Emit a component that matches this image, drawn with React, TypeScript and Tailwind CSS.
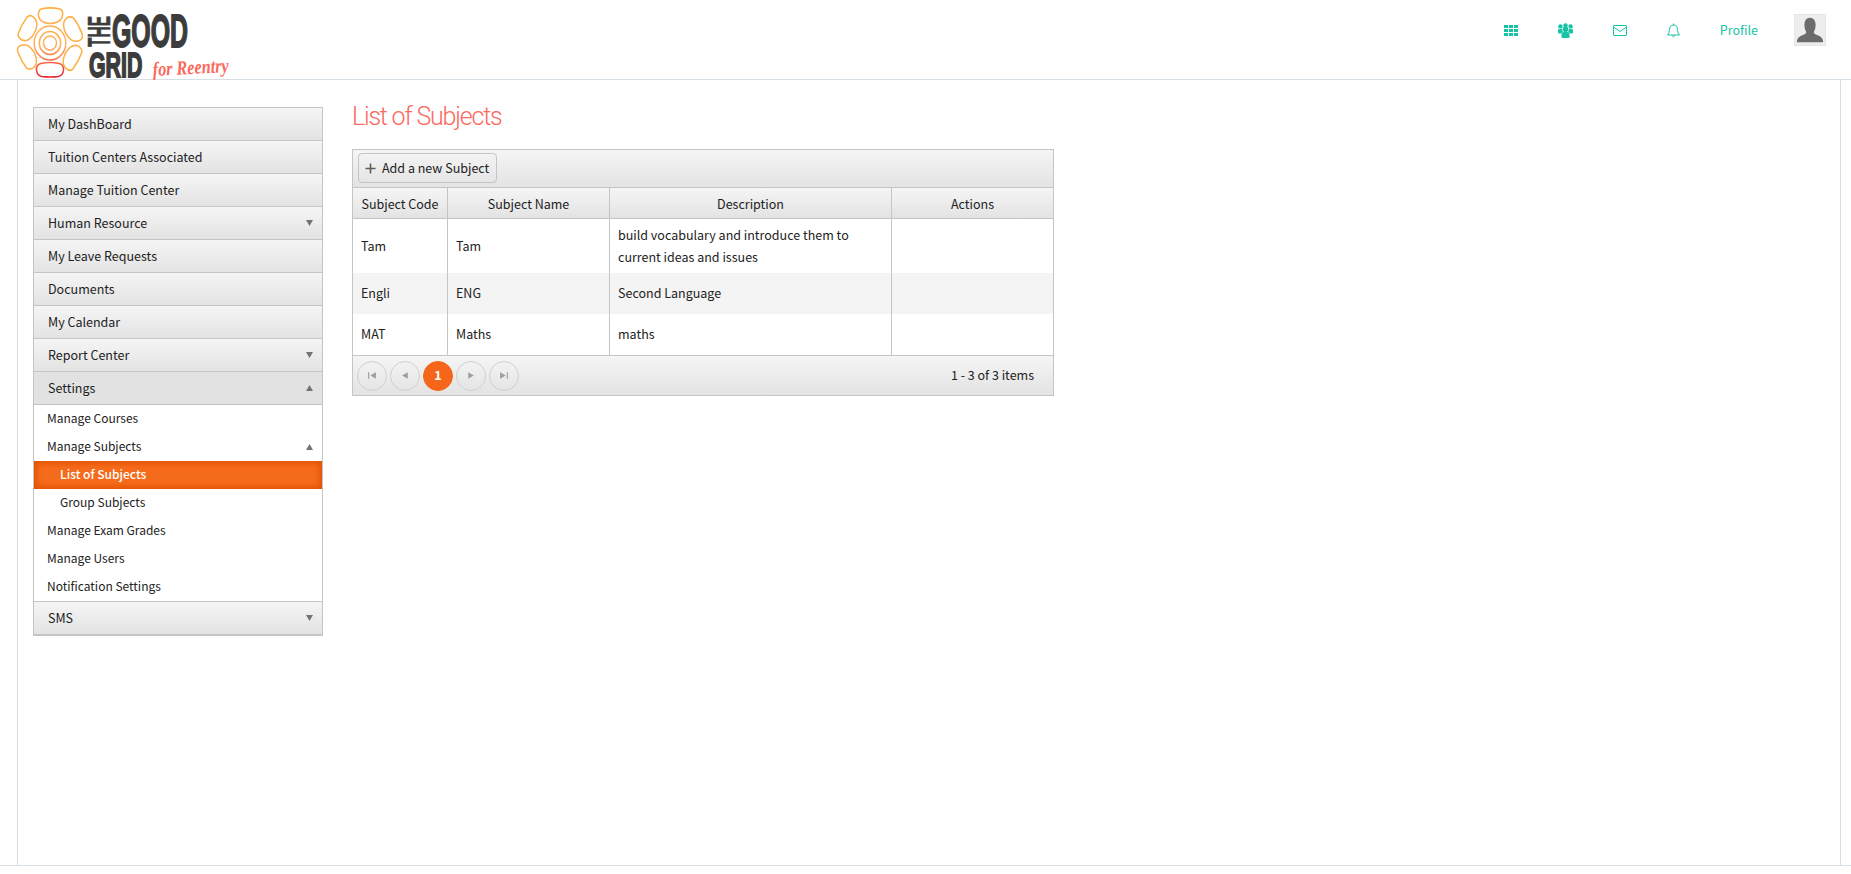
import type { ReactNode } from 'react';

const BODY_FONT = "font-['Noto_Sans_CJK_SC','Noto_Sans',sans-serif]";

function Arrow({ up }: { up?: boolean }) {
  return (
    <svg width="7" height="6" viewBox="0 0 7 6" className="absolute right-[9px] top-1/2 -translate-y-1/2">
      <path d={up ? 'M3.5 0 L7 6 L0 6 Z' : 'M0 0 L7 0 L3.5 6 Z'} fill="#777270" />
    </svg>
  );
}

function PanelRow({ label, arrow, open }: { label: string; arrow?: 'up' | 'down'; open?: boolean }) {
  return (
    <div
      className={`relative h-[33px] border-t border-[#c5c5c5] first:h-[32px] first:border-t-0 pl-[14px] leading-[32px] ${
        open ? 'bg-[#e2e2e2]' : 'bg-linear-to-b from-[#f5f5f5] to-[#e3e3e3]'
      }`}
    >
      {label}
      {arrow && <Arrow up={arrow === 'up'} />}
    </div>
  );
}

function SubRow({ label, indent, arrow, selected }: { label: string; indent?: boolean; arrow?: boolean; selected?: boolean }) {
  return (
    <div
      className={`relative h-[28px] text-[12px] leading-[26px] ${indent ? 'pl-[26px]' : 'pl-[13px]'} ${
        selected ? 'bg-[#f56b1c] font-medium text-white shadow-[inset_0_0_6px_2px_#e04f00]' : ''
      }`}
    >
      {label}
      {arrow && <Arrow up />}
    </div>
  );
}

function Sidebar() {
  return (
    <div className="w-[290px] shrink-0 self-start border border-b-2 border-[#c5c5c5] text-[12.5px] text-[#222]">
      <PanelRow label="My DashBoard" />
      <PanelRow label="Tuition Centers Associated" />
      <PanelRow label="Manage Tuition Center" />
      <PanelRow label="Human Resource" arrow="down" />
      <PanelRow label="My Leave Requests" />
      <PanelRow label="Documents" />
      <PanelRow label="My Calendar" />
      <PanelRow label="Report Center" arrow="down" />
      <PanelRow label="Settings" arrow="up" open />
      <div className="border-t border-[#c5c5c5] bg-white">
        <SubRow label="Manage Courses" />
        <SubRow label="Manage Subjects" arrow />
        <SubRow label="List of Subjects" indent selected />
        <SubRow label="Group Subjects" indent />
        <SubRow label="Manage Exam Grades" />
        <SubRow label="Manage Users" />
        <SubRow label="Notification Settings" />
      </div>
      <PanelRow label="SMS" arrow="down" />
    </div>
  );
}

function PagerButton({ children, active }: { children: ReactNode; active?: boolean }) {
  return (
    <div
      className={`flex h-[30px] w-[30px] items-center justify-center rounded-full border ${
        active ? 'border-[#f5651a] bg-[#f5651a] font-semibold text-white' : 'border-[#d0d0d0]'
      }`}
    >
      {children}
    </div>
  );
}

function PagerIcon({ d }: { d: string }) {
  return (
    <svg width="10" height="9" viewBox="0 0 9 8">
      <path d={d} fill="#a09c9a" />
    </svg>
  );
}

const COLS = 'grid grid-cols-[95px_162px_282px_1fr]';

function Cell({ children, last }: { children?: ReactNode; last?: boolean }) {
  return <div className={`flex items-center px-[8px] ${last ? '' : 'border-r border-[#c5c5c5]'}`}>{children}</div>;
}

function HeadCell({ children, last }: { children: ReactNode; last?: boolean }) {
  return (
    <div className={`flex items-center justify-center pt-[2px] ${last ? '' : 'border-r border-[#c5c5c5]'}`}>{children}</div>
  );
}

function SubjectsTable() {
  return (
    <div className="w-[702px] border border-[#c5c5c5] text-[12.5px] text-[#222]">
      <div className="h-[37px] bg-linear-to-b from-[#f5f5f5] to-[#e3e3e3] pl-[5px] pt-[3px]">
        <div className="flex h-[30px] w-[139px] items-center whitespace-nowrap rounded-[4px] border border-[#c5c5c5] pl-[6px]">
          <svg width="11" height="11" viewBox="0 0 11 11" className="mr-[6px]">
            <path d="M5.5 0.5 V10.5 M0.5 5.5 H10.5" stroke="#605c5a" strokeWidth="1.6" />
          </svg>
          Add a new Subject
        </div>
      </div>
      <div className={`${COLS} h-[32px] border-y border-[#c5c5c5] bg-linear-to-b from-[#f5f5f5] to-[#e3e3e3]`}>
        <HeadCell>Subject Code</HeadCell>
        <HeadCell>Subject Name</HeadCell>
        <HeadCell>Description</HeadCell>
        <HeadCell last>Actions</HeadCell>
      </div>
      <div className={`${COLS} h-[54px]`}>
        <Cell>Tam</Cell>
        <Cell>Tam</Cell>
        <Cell>
          <span className="leading-[22px]">build vocabulary and introduce them to current ideas and issues</span>
        </Cell>
        <Cell last />
      </div>
      <div className={`${COLS} h-[41px] bg-[#f4f4f4]`}>
        <Cell>Engli</Cell>
        <Cell>ENG</Cell>
        <Cell>Second Language</Cell>
        <Cell last />
      </div>
      <div className={`${COLS} h-[41px]`}>
        <Cell>MAT</Cell>
        <Cell>Maths</Cell>
        <Cell>maths</Cell>
        <Cell last />
      </div>
      <div className="flex h-[40px] items-center justify-between border-t border-[#c5c5c5] bg-linear-to-b from-[#f5f5f5] to-[#e3e3e3] pl-[4px] pr-[19px]">
        <div className="flex gap-[3px]">
          <PagerButton><PagerIcon d="M1 1 H2 V7 H1 Z M8 1 V7 L3 4 Z" /></PagerButton>
          <PagerButton><PagerIcon d="M7 1 V7 L2 4 Z" /></PagerButton>
          <PagerButton active>1</PagerButton>
          <PagerButton><PagerIcon d="M2 1 V7 L7 4 Z" /></PagerButton>
          <PagerButton><PagerIcon d="M1 1 V7 L6 4 Z M7 1 H8 V7 H7 Z" /></PagerButton>
        </div>
        <span>1 - 3 of 3 items</span>
      </div>
    </div>
  );
}

function Logo() {
  const petal = 'M41 8.7 Q50 7 60 8.7 Q64.5 10 63.5 15 Q62.5 20 58 22 Q50 25 43 22 Q38 20 37.5 15 Q37.5 10 41 8.7 Z';
  return (
    <svg width="240" height="80" viewBox="0 0 240 80" className="block">
      <defs>
        <linearGradient id="petal" gradientUnits="userSpaceOnUse" x1="0" y1="8" x2="0" y2="78">
          <stop offset="0" stopColor="#ffae42" />
          <stop offset="0.55" stopColor="#ffb060" />
          <stop offset="1" stopColor="#ea1c2c" />
        </linearGradient>
      </defs>
      <g fill="none" stroke="url(#petal)" strokeWidth="1.6" transform="translate(50 43) scale(0.93 1) translate(-50 -43)">
        {[0, 60, 120, 240, 300].map((deg) => (
          <path key={deg} d={petal} transform={`rotate(${deg} 50 43)`} />
        ))}
        <path d="M40 63.5 Q50 61.5 60 63.5 Q65 65 64.5 70 Q64 75.5 59 76.5 Q50 77.5 41 76.5 Q36 75.5 35.5 70 Q35 65 40 63.5 Z" />
        <circle cx="50" cy="43" r="7" />
        <circle cx="50" cy="43" r="11.5" />
        <circle cx="50" cy="43" r="17" />
      </g>
      <g fill="#3c3c3c" stroke="#3c3c3c" fontFamily="'Liberation Sans',sans-serif" fontWeight="700">
        <text transform="translate(112 47) scale(0.53 1)" fontSize="47" strokeWidth="1.8">GOOD</text>
        <text transform="translate(89 77) scale(0.61 1)" fontSize="35" strokeWidth="1.8">GRID</text>
        <text transform="translate(110 47) rotate(-90) scale(0.5 1)" fontSize="31" strokeWidth="0.5">THE</text>
      </g>
      <text
        transform="translate(153 76) rotate(-3) scale(0.81 1)"
        fontFamily="'Liberation Serif',serif"
        fontStyle="italic"
        fontWeight="700"
        fontSize="20"
        fill="#fa6a5c"
      >
        for Reentry
      </text>
    </svg>
  );
}

function Header() {
  return (
    <div className="flex h-[80px] shrink-0 items-start justify-between border-b border-[#d6dfe6] bg-white">
      <Logo />
      <div className="flex h-[60px] items-center text-[12.5px] text-[#17c3a5]">
        <svg width="14" height="11" viewBox="0 0 14 11" fill="currentColor" className="mr-[40px]">
          <path d="M0 0 H4 V3 H0 Z M5 0 H9 V3 H5 Z M10 0 H14 V3 H10 Z M0 4 H4 V7 H0 Z M5 4 H9 V7 H5 Z M10 4 H14 V7 H10 Z M0 8 H4 V11 H0 Z M5 8 H9 V11 H5 Z M10 8 H14 V11 H10 Z" />
        </svg>
        <svg width="15" height="15" viewBox="0 0 15 15" fill="currentColor" className="mr-[40px]">
          <circle cx="2.4" cy="3.4" r="2.2" />
          <circle cx="12.6" cy="3.4" r="2.2" />
          <circle cx="7.5" cy="2.4" r="2.2" />
          <circle cx="7.5" cy="6.2" r="2.8" />
          <path d="M0 6.5 Q0 6 2.5 6 H4 Q4.5 8.5 5 9 Q3.5 9.5 3 10.5 H1 Q0 10.5 0 9.5 Z" />
          <path d="M15 6.5 Q15 6 12.5 6 H11 Q10.5 8.5 10 9 Q11.5 9.5 12 10.5 H14 Q15 10.5 15 9.5 Z" />
          <path d="M3.5 11 Q3.5 9 6 9 H9 Q11.5 9 11.5 11 V14 Q11.5 15 10.5 15 H4.5 Q3.5 15 3.5 14 Z" />
        </svg>
        <svg width="14" height="11" viewBox="0 0 14 11" fill="none" stroke="currentColor" className="mr-[40px]">
          <rect x="0.5" y="0.5" width="13" height="10" rx="0.5" />
          <path d="M0.5 2 L7 6.5 L13.5 2" />
        </svg>
        <svg width="13" height="15" viewBox="0 0 13 15" fill="none" stroke="currentColor" className="mr-[40px]">
          <path d="M0.5 12 Q2.5 10 2.5 6.5 Q2.5 2 6.5 2 Q10.5 2 10.5 6.5 Q10.5 10 12.5 12 Z" />
          <path d="M6.5 0.5 V2 M5 12.5 Q6.5 15 8 12.5" />
        </svg>
        <span className="mr-[36px]">Profile</span>
        <div className="mr-[25px] h-[32px] w-[32px] overflow-hidden border border-[#e6e6e6] bg-[#ededed]">
          <svg width="30" height="30" viewBox="0 0 32 32">
            <path
              d="M16 3 Q22 3 22 11 Q22 15 20 18 Q20 20 23 21 Q30 23 30 29 L2 29 Q2 23 9 21 Q12 20 12 18 Q10 15 10 11 Q10 3 16 3 Z"
              fill="#6c6c6c"
            />
          </svg>
        </div>
      </div>
    </div>
  );
}

export default function App() {
  return (
    <div className={`h-screen bg-white ${BODY_FONT}`}>
      <Header />
      <div className="h-[786px] border-b border-[#d6dfe6]">
        <div className="ml-[17px] mr-[10px] flex h-full border-x border-[#d6dfe6] pl-[15px] pt-[27px]">
          <Sidebar />
          <div className="ml-[29px]">
            <h1 className="-mt-[10px] mb-[13px] h-[39px] font-['Roboto',sans-serif] text-[25px] font-light leading-[39px] tracking-[-1.2px] text-[#fb6a5f]">
              List of Subjects
            </h1>
            <SubjectsTable />
          </div>
        </div>
      </div>
    </div>
  );
}
